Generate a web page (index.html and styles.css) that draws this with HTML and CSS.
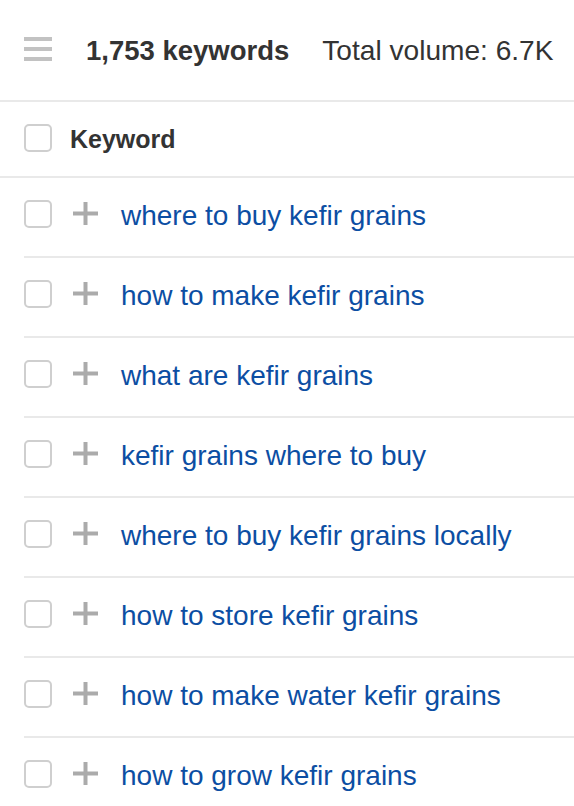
FILE: index.html
```html
<!DOCTYPE html>
<html>
<head>
<meta charset="utf-8">
<link rel="stylesheet" href="styles.css">
</head>
<body>
<div class="topbar">
  <div class="burger"><span></span><span></span><span></span></div>
  <div class="count">1,753 keywords</div>
  <div class="volume">Total volume: 6.7K</div>
</div>
<div class="colhead">
  <span class="box"></span>
  <span class="colname">Keyword</span>
</div>
<ul class="list">
  <li class="row"><span class="box"></span><svg class="plus" viewBox="0 0 25 25" width="25" height="25"><path d="M12.5 1v23M0 12.5h25"/></svg><a class="kw">where to buy kefir grains</a></li>
  <li class="row"><span class="box"></span><svg class="plus" viewBox="0 0 25 25" width="25" height="25"><path d="M12.5 1v23M0 12.5h25"/></svg><a class="kw">how to make kefir grains</a></li>
  <li class="row"><span class="box"></span><svg class="plus" viewBox="0 0 25 25" width="25" height="25"><path d="M12.5 1v23M0 12.5h25"/></svg><a class="kw">what are kefir grains</a></li>
  <li class="row"><span class="box"></span><svg class="plus" viewBox="0 0 25 25" width="25" height="25"><path d="M12.5 1v23M0 12.5h25"/></svg><a class="kw">kefir grains where to buy</a></li>
  <li class="row"><span class="box"></span><svg class="plus" viewBox="0 0 25 25" width="25" height="25"><path d="M12.5 1v23M0 12.5h25"/></svg><a class="kw">where to buy kefir grains locally</a></li>
  <li class="row"><span class="box"></span><svg class="plus" viewBox="0 0 25 25" width="25" height="25"><path d="M12.5 1v23M0 12.5h25"/></svg><a class="kw">how to store kefir grains</a></li>
  <li class="row"><span class="box"></span><svg class="plus" viewBox="0 0 25 25" width="25" height="25"><path d="M12.5 1v23M0 12.5h25"/></svg><a class="kw">how to make water kefir grains</a></li>
  <li class="row"><span class="box"></span><svg class="plus" viewBox="0 0 25 25" width="25" height="25"><path d="M12.5 1v23M0 12.5h25"/></svg><a class="kw">how to grow kefir grains</a></li>
</ul>
</body>
</html>
```

FILE: styles.css
```css
* { box-sizing: border-box; }
html, body { margin: 0; padding: 0; background: #fff; }
body {
  font-family: "Liberation Sans", Arial, sans-serif;
  color: #333;
  overflow: hidden;
  height: 806px;
}
.topbar {
  height: 102px;
  border-bottom: 2px solid #e9e9e9;
  display: flex;
  align-items: center;
  padding: 0 0 2px 24px;
}
.burger {
  width: 28px;
  display: flex;
  flex-direction: column;
  gap: 6px;
  margin-right: 34px;
}
.burger span {
  display: block;
  height: 4px;
  background: #c2c2c2;
}
.count {
  font-weight: bold;
  font-size: 27.5px;
  margin-right: 33px;
  margin-top: 4px;
}
.volume {
  font-size: 28.1px;
  margin-top: 4px;
}
.box {
  display: block;
  flex: none;
  width: 28px;
  height: 28px;
  border: 2px solid #cfcfcf;
  border-radius: 5px;
}
.colhead {
  height: 76px;
  border-bottom: 2px solid #e9e9e9;
  display: flex;
  align-items: center;
  padding-left: 24px;
  padding-bottom: 2px;
}
.colname {
  font-weight: bold;
  font-size: 25px;
  margin-left: 18px;
  margin-top: 2px;
}
.list {
  list-style: none;
  margin: 0;
  padding: 0 0 0 24px;
}
.row {
  height: 80px;
  border-bottom: 2px solid #e9e9e9;
  display: flex;
  align-items: center;
  padding-bottom: 7px;
}
.plus {
  display: block;
  flex: none;
  margin-left: 21px;
  fill: none;
  stroke: #ababab;
  stroke-width: 4;
}
.kw {
  margin-left: 23px;
  margin-top: 4px;
  font-size: 28px;
  color: #0c4ea3;
  text-decoration: none;
}
```
